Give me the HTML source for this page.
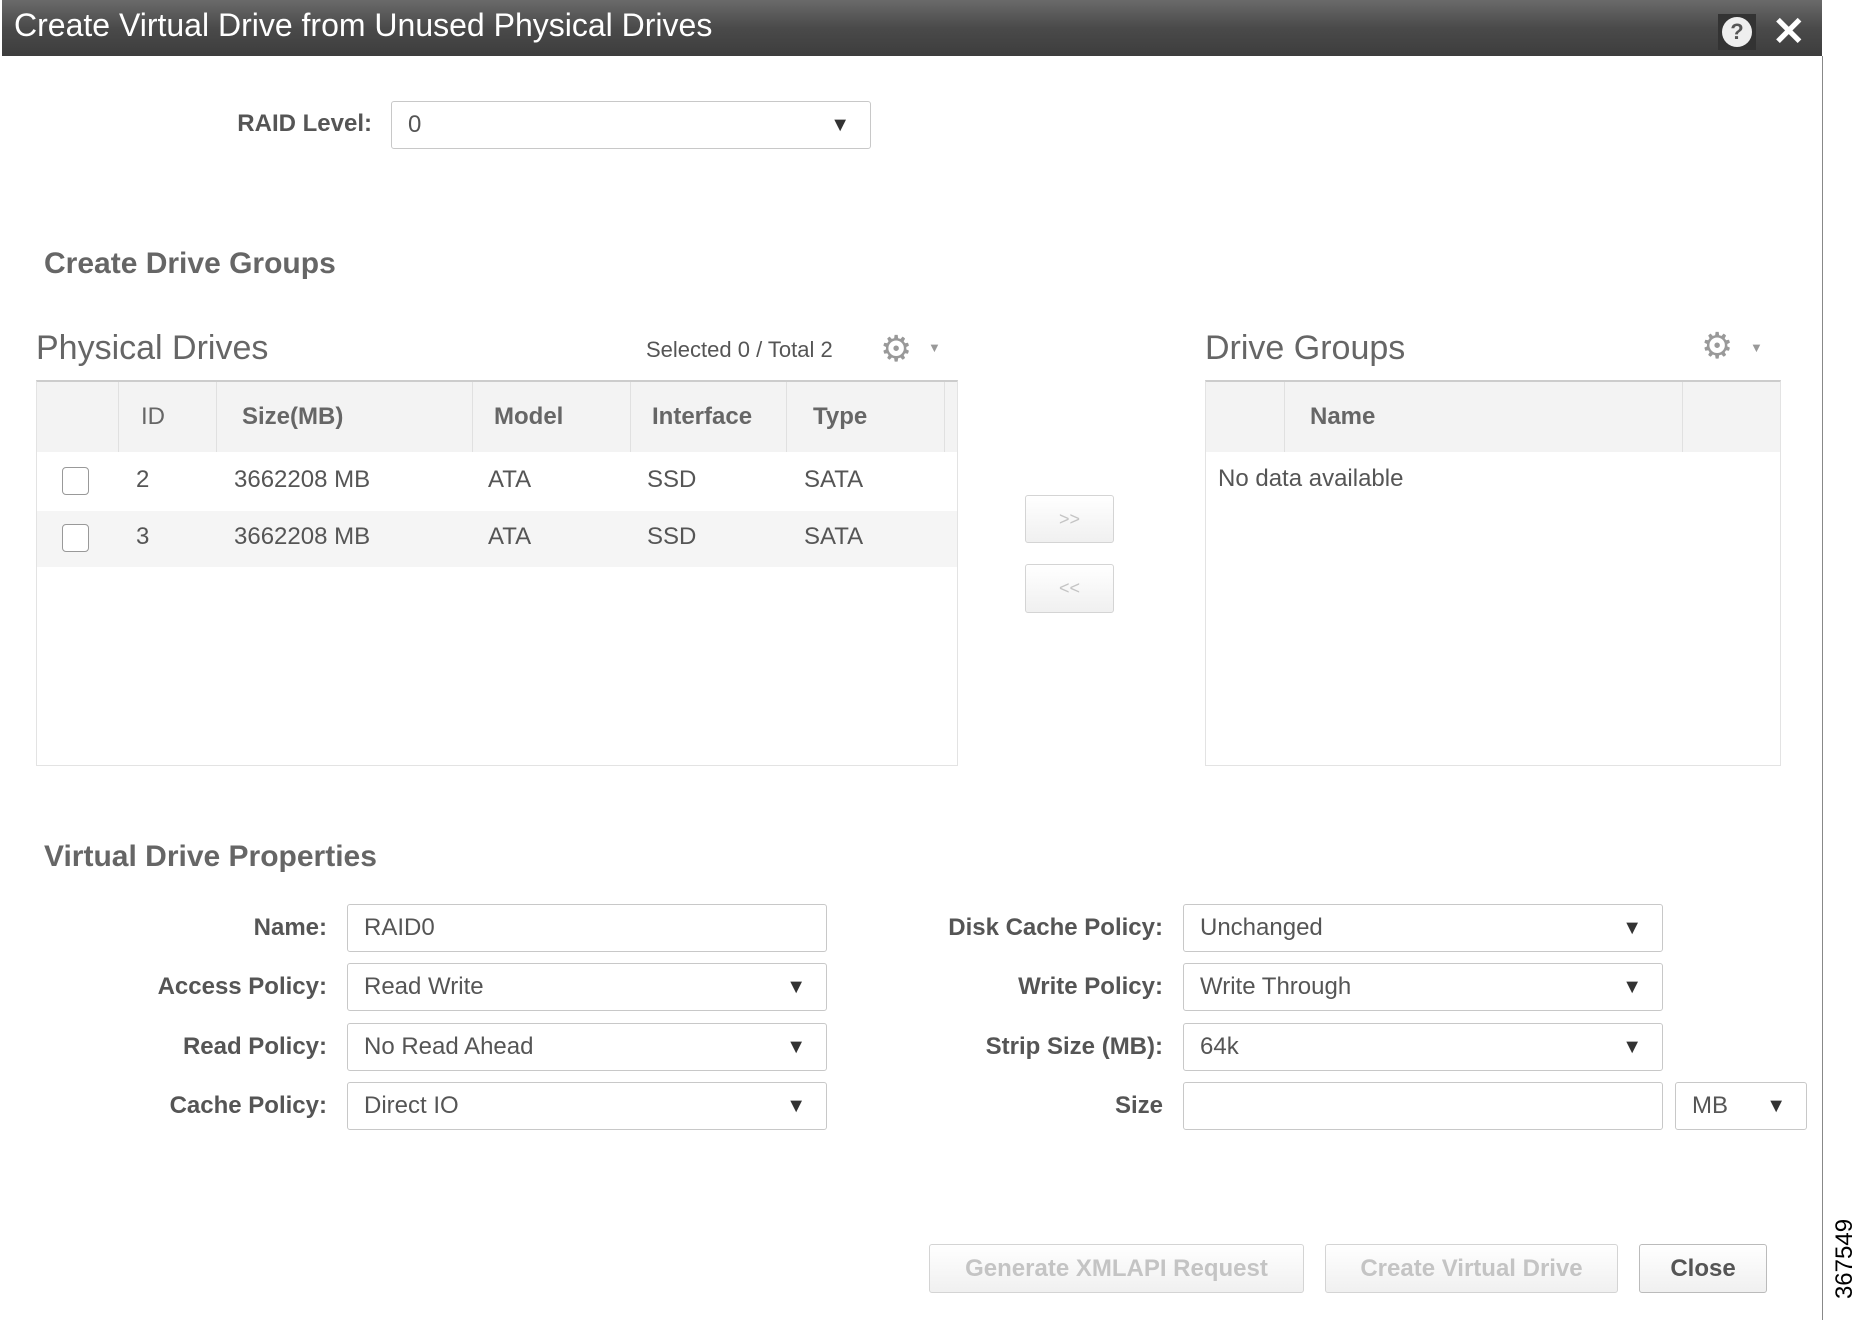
<!DOCTYPE html>
<html><head><meta charset="utf-8"><style>
*{box-sizing:border-box;margin:0;padding:0}
body{width:1863px;height:1320px;background:#fff;position:relative;overflow:hidden;font-family:"Liberation Sans Narrow","Liberation Sans",sans-serif;color:#555}
.a{position:absolute;white-space:nowrap}
.title{left:2px;top:0;width:1820px;height:56px;background:linear-gradient(#6a6a6a,#4a4a4a 50%,#3d3d3d);}
.lbl{font-size:24px;font-weight:bold;color:#555;text-align:right}
.box{position:absolute;border:1px solid #c8c8c8;border-radius:3px;background:#fff;font-size:24px;color:#555;padding-left:16px;display:flex;align-items:center}
.box .c{position:absolute;right:20px;font-size:20px;color:#333}
.h{font-size:30px;font-weight:bold;color:#666}
.th{font-size:24px;color:#666;font-weight:bold}
.td{font-size:24px;color:#555}
.btn{position:absolute;border:1px solid #d4d4d4;border-radius:3px;background:linear-gradient(#fff,#f0f0f0);font-size:24px;display:flex;align-items:center;justify-content:center;font-weight:bold;color:#c4c4c4}
.cb{position:absolute;width:27px;height:28px;border:1px solid #999;border-radius:4px;background:#fff}
</style></head><body>
<div class="a title"></div>
<div class="a" style="left:14px;top:7px;font-size:32px;color:#fff">Create Virtual Drive from Unused Physical Drives</div>
<div class="a" style="left:1718px;top:14px;width:38px;height:36px;background:#333"></div>
<div class="a" style="left:1722px;top:17px;width:30px;height:30px;border-radius:50%;background:#eee;color:#555;font-size:22px;font-weight:bold;text-align:center;line-height:30px">?</div>
<div class="a" style="left:1772px;top:9px;font-size:40px;font-weight:bold;color:#fff;font-family:'Liberation Sans',sans-serif">✕</div>
<div class="a" style="left:1822px;top:56px;width:1px;height:1264px;background:#888"></div>

<div class="a lbl" style="right:1491px;top:110px">RAID Level:</div>
<div class="box" style="left:391px;top:101px;width:480px;height:48px">0<span class="c">▼</span></div>

<div class="a h" style="left:44px;top:247px">Create Drive Groups</div>

<div class="a" style="left:36px;top:329px;font-size:34px;color:#666">Physical Drives</div>
<div class="a" style="left:646px;top:337px;font-size:22px;color:#555">Selected 0 / Total 2</div>
<div class="a" style="left:880px;top:328px;font-size:36px;color:#999">⚙</div>
<div class="a" style="left:928px;top:340px;font-size:13px;color:#999">▼</div>

<div class="a" style="left:36px;top:380px;width:922px;height:386px;border:1px solid #e3e3e3;border-top:2px solid #ccc"></div>
<div class="a" style="left:37px;top:382px;width:920px;height:70px;background:#f3f3f3"></div>
<div class="a" style="left:118px;top:382px;width:1px;height:70px;background:#e0e0e0"></div>
<div class="a" style="left:216px;top:382px;width:1px;height:70px;background:#e0e0e0"></div>
<div class="a" style="left:472px;top:382px;width:1px;height:70px;background:#e0e0e0"></div>
<div class="a" style="left:630px;top:382px;width:1px;height:70px;background:#e0e0e0"></div>
<div class="a" style="left:786px;top:382px;width:1px;height:70px;background:#e0e0e0"></div>
<div class="a" style="left:944px;top:382px;width:1px;height:70px;background:#e0e0e0"></div>
<div class="a th" style="left:141px;top:403px;font-weight:normal">ID</div>
<div class="a th" style="left:242px;top:403px">Size(MB)</div>
<div class="a th" style="left:494px;top:403px">Model</div>
<div class="a th" style="left:652px;top:403px">Interface</div>
<div class="a th" style="left:813px;top:403px">Type</div>
<div class="a" style="left:37px;top:511px;width:920px;height:56px;background:#f5f5f5"></div>
<div class="cb" style="left:62px;top:467px"></div>
<div class="cb" style="left:62px;top:524px"></div>
<div class="a td" style="left:136px;top:466px">2</div>
<div class="a td" style="left:234px;top:466px">3662208 MB</div>
<div class="a td" style="left:488px;top:466px">ATA</div>
<div class="a td" style="left:647px;top:466px">SSD</div>
<div class="a td" style="left:804px;top:466px">SATA</div>
<div class="a td" style="left:136px;top:523px">3</div>
<div class="a td" style="left:234px;top:523px">3662208 MB</div>
<div class="a td" style="left:488px;top:523px">ATA</div>
<div class="a td" style="left:647px;top:523px">SSD</div>
<div class="a td" style="left:804px;top:523px">SATA</div>

<div class="btn" style="left:1025px;top:495px;width:89px;height:48px;font-size:18px;font-weight:normal">&gt;&gt;</div>
<div class="btn" style="left:1025px;top:564px;width:89px;height:49px;font-size:18px;font-weight:normal">&lt;&lt;</div>

<div class="a" style="left:1205px;top:329px;font-size:34px;color:#666">Drive Groups</div>
<div class="a" style="left:1701px;top:325px;font-size:36px;color:#999">⚙</div>
<div class="a" style="left:1750px;top:340px;font-size:13px;color:#999">▼</div>
<div class="a" style="left:1205px;top:380px;width:576px;height:386px;border:1px solid #e3e3e3;border-top:2px solid #ccc"></div>
<div class="a" style="left:1206px;top:382px;width:574px;height:70px;background:#f3f3f3"></div>
<div class="a" style="left:1284px;top:382px;width:1px;height:70px;background:#e0e0e0"></div>
<div class="a" style="left:1682px;top:382px;width:1px;height:70px;background:#e0e0e0"></div>
<div class="a th" style="left:1310px;top:403px">Name</div>
<div class="a td" style="left:1218px;top:465px">No data available</div>

<div class="a h" style="left:44px;top:840px">Virtual Drive Properties</div>

<div class="a lbl" style="right:1536px;top:914px">Name:</div>
<div class="a lbl" style="right:1536px;top:973px">Access Policy:</div>
<div class="a lbl" style="right:1536px;top:1033px">Read Policy:</div>
<div class="a lbl" style="right:1536px;top:1092px">Cache Policy:</div>
<div class="box" style="left:347px;top:904px;width:480px;height:48px">RAID0</div>
<div class="box" style="left:347px;top:963px;width:480px;height:48px">Read Write<span class="c">▼</span></div>
<div class="box" style="left:347px;top:1023px;width:480px;height:48px">No Read Ahead<span class="c">▼</span></div>
<div class="box" style="left:347px;top:1082px;width:480px;height:48px">Direct IO<span class="c">▼</span></div>

<div class="a lbl" style="right:700px;top:914px">Disk Cache Policy:</div>
<div class="a lbl" style="right:700px;top:973px">Write Policy:</div>
<div class="a lbl" style="right:700px;top:1033px">Strip Size (MB):</div>
<div class="a lbl" style="right:700px;top:1092px">Size</div>
<div class="box" style="left:1183px;top:904px;width:480px;height:48px">Unchanged<span class="c">▼</span></div>
<div class="box" style="left:1183px;top:963px;width:480px;height:48px">Write Through<span class="c">▼</span></div>
<div class="box" style="left:1183px;top:1023px;width:480px;height:48px">64k<span class="c">▼</span></div>
<div class="box" style="left:1183px;top:1082px;width:480px;height:48px"></div>
<div class="box" style="left:1675px;top:1082px;width:132px;height:48px">MB<span class="c">▼</span></div>

<div class="btn" style="left:929px;top:1244px;width:375px;height:49px">Generate XMLAPI Request</div>
<div class="btn" style="left:1325px;top:1244px;width:293px;height:49px">Create Virtual Drive</div>
<div class="btn" style="left:1639px;top:1244px;width:128px;height:49px;color:#555;border-color:#bbb">Close</div>

<div class="a" style="left:1800px;top:1245px;width:90px;transform:rotate(-90deg);font-family:'Liberation Sans',sans-serif;font-size:24px;color:#000;text-align:center">367549</div>
</body></html>
